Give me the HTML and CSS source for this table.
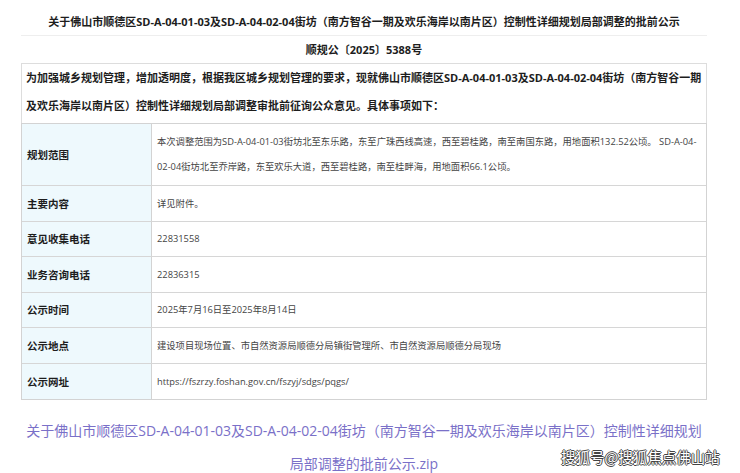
FILE: index.html
```html
<!DOCTYPE html>
<html lang="zh-CN">
<head>
<meta charset="utf-8">
<title>批前公示</title>
<link rel="stylesheet" href="styles.css">
</head>
<body>
<div class="page">
  <div class="notice">
    <h1 class="title">关于佛山市顺德区SD-A-04-01-03及SD-A-04-02-04街坊（南方智谷一期及欢乐海岸以南片区）控制性详细规划局部调整的批前公示</h1>
    <div class="docno">顺规公〔2025〕5388号</div>
    <div class="intro">为加强城乡规划管理，增加透明度，根据我区城乡规划管理的要求，现就佛山市顺德区SD-A-04-01-03及SD-A-04-02-04街坊（南方智谷一期<br>及欢乐海岸以南片区）控制性详细规划局部调整审批前征询公众意见。具体事项如下：</div>
    <div class="table">
      <div class="row row-tall">
        <div class="label">规划范围</div>
        <div class="value">本次调整范围为SD-A-04-01-03街坊北至东乐路，东至广珠西线高速，西至碧桂路，南至南国东路，用地面积132.52公顷。 SD-A-04-<br>02-04街坊北至乔岸路，东至欢乐大道，西至碧桂路，南至桂畔海，用地面积66.1公顷。</div>
      </div>
      <div class="row">
        <div class="label">主要内容</div>
        <div class="value">详见附件。</div>
      </div>
      <div class="row">
        <div class="label">意见收集电话</div>
        <div class="value">22831558</div>
      </div>
      <div class="row">
        <div class="label">业务咨询电话</div>
        <div class="value">22836315</div>
      </div>
      <div class="row">
        <div class="label">公示时间</div>
        <div class="value">2025年7月16日至2025年8月14日</div>
      </div>
      <div class="row">
        <div class="label">公示地点</div>
        <div class="value">建设项目现场位置、市自然资源局顺德分局镇街管理所、市自然资源局顺德分局现场</div>
      </div>
      <div class="row">
        <div class="label">公示网址</div>
        <div class="value">https://fszrzy.foshan.gov.cn/fszyj/sdgs/pqgs/</div>
      </div>
    </div>
    <p class="attach"><a class="attach-link" href="#">关于佛山市顺德区SD-A-04-01-03及SD-A-04-02-04街坊（南方智谷一期及欢乐海岸以南片区）控制性详细规划局部调整的批前公示.zip</a></p>
  </div>
  <div class="watermark">搜狐号@搜狐焦点佛山站</div>
</div>
</body>
</html>
```
FILE: styles.css
```css
* { box-sizing: border-box; }
html, body { margin: 0; padding: 0; background: #fff; }
body {
  font-family: "Open Sans", "Noto Sans CJK SC", sans-serif;
  color: #222;
}
.page {
  position: relative;
  width: 740px;
  height: 473px;
  overflow: hidden;
}
.notice {
  margin-left: 21px;
  width: 686px;
}
.title {
  margin: 0;
  padding-top: 10px;
  height: 36px;
  font-size: 11px;
  line-height: 24px;
  font-weight: 700;
  text-align: center;
  border-bottom: 1px solid #eeeeee;
  white-space: nowrap;
  color: #1d1d1d;
}
.docno {
  height: 27px;
  line-height: 27px;
  font-size: 11px;
  font-weight: 700;
  text-align: center;
  color: #1d1d1d;
}
.intro {
  border: 1px solid #dddddd;
  border-bottom: none;
  padding: 0 4px 3px;
  font-size: 11px;
  line-height: 28px;
  font-weight: 700;
  white-space: nowrap;
  color: #1d1d1d;
}
.table {
  border: 1px solid #d3d3d3;
  display: flex;
  flex-direction: column;
}
.row {
  display: grid;
  grid-template-columns: 130px 1fr;
  height: 35.5px;
  border-bottom: 1px solid #d6d6d6;
}
.row:last-child { border-bottom: none; height: 35px; }
.row-tall { height: 62px; }
.label {
  background: #eef9fd;
  border-right: 1px solid #d3d3d3;
  padding-left: 5px;
  display: flex;
  align-items: center;
  font-size: 10.5px;
  font-weight: 700;
  color: #1d1d1d;
}
.value {
  padding-left: 5px;
  display: flex;
  align-items: center;
  font-size: 9.3px;
  line-height: 25px;
  color: #444;
  white-space: nowrap;
}
.row-tall .value { display: block; padding-top: 5px; }
.attach {
  margin: 14px 0 0;
  text-align: center;
  font-size: 14px;
  line-height: 33px;
}
.attach-link {
  color: #7a70c8;
  text-decoration: none;
}
.watermark {
  position: absolute;
  left: 561px;
  top: 446px;
  font-family: "Noto Sans CJK SC", sans-serif;
  font-size: 14.5px;
  font-weight: 400;
  line-height: 22px;
  color: #fff;
  text-shadow: -1px 0 0 #444, 1px 0 0 #444, 0 -1px 0 #444, 0 1px 0 #444;
}
```
